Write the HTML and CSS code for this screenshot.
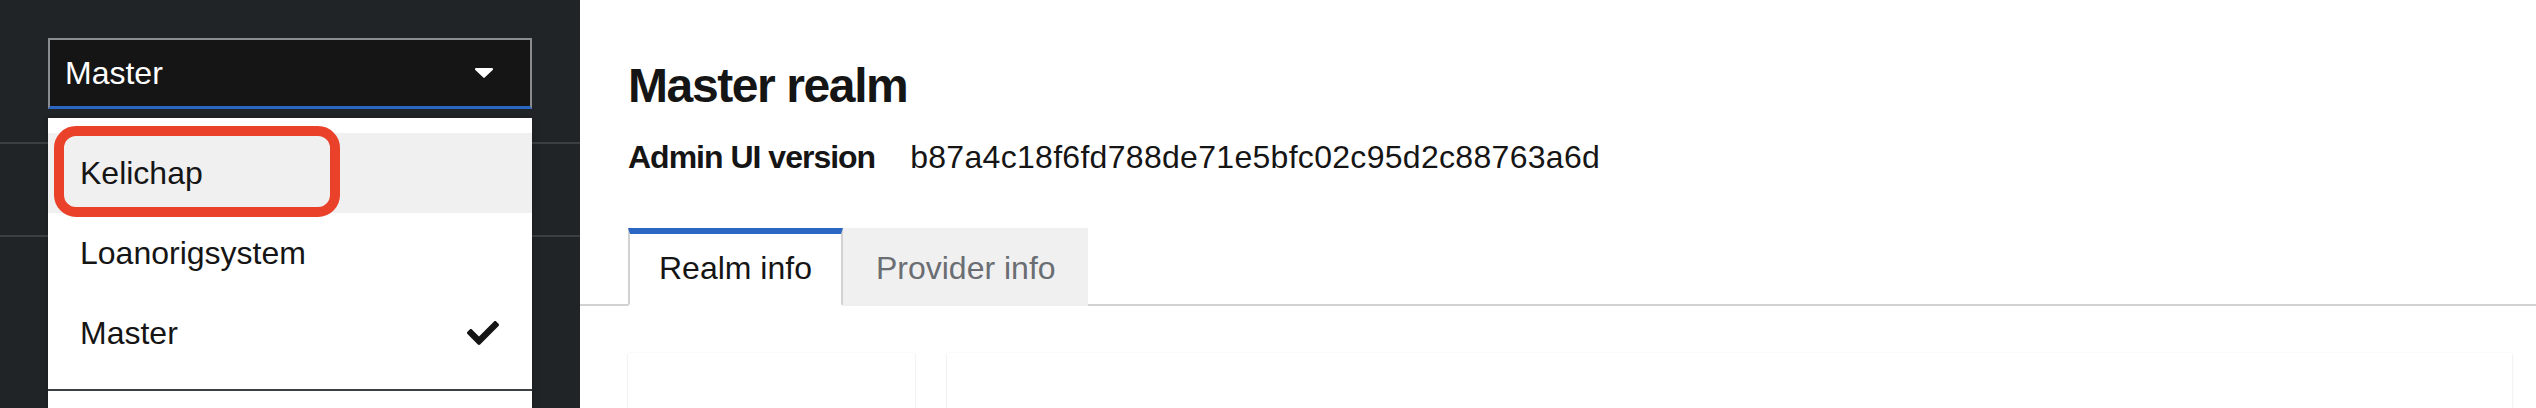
FILE: index.html
```html
<!DOCTYPE html>
<html lang="en">
<head>
<meta charset="utf-8">
<title>Master realm</title>
<link rel="stylesheet" href="styles.css">
</head>
<body>
<div class="page">
  <aside class="sidebar">
    <div class="realm-select">
      <button class="toggle" type="button">
        <span class="toggle-text">Master</span>
        <svg class="caret" viewBox="0 0 18 10" width="18" height="10" aria-hidden="true"><path d="M1.2 0h15.6c1 0 1.6 1.2.9 1.9L9.7 9.6c-.4.4-1 .4-1.4 0L.3 1.9C-.4 1.2.2 0 1.2 0z"/></svg>
      </button>
      <div class="menu">
        <ul class="menu-list">
          <li class="menu-item hovered"><span class="item-text">Kelichap</span><span class="annotation"></span></li>
          <li class="menu-item"><span class="item-text">Loanorigsystem</span></li>
          <li class="menu-item"><span class="item-text">Master</span>
            <svg class="check" viewBox="0 0 512 512" width="32" height="32" aria-hidden="true"><path d="M173.898 439.404l-166.4-166.4c-9.997-9.997-9.997-26.206 0-36.204l36.203-36.204c9.997-9.998 26.207-9.998 36.204 0L192 312.69 432.095 72.596c9.997-9.997 26.207-9.997 36.204 0l36.203 36.204c9.997 9.997 9.997 26.206 0 36.204l-294.4 294.401c-9.998 9.997-26.207 9.997-36.204-.001z"/></svg>
          </li>
        </ul>
        <div class="menu-footer"></div>
      </div>
    </div>
    <nav class="nav">
      <div class="nav-group"></div>
      <div class="nav-group"></div>
    </nav>
  </aside>
  <main class="main">
    <header class="header">
      <h1 class="title">Master realm</h1>
      <div class="version-row">
        <span class="version-label">Admin UI version</span>
        <span class="version-value">b87a4c18f6fd788de71e5bfc02c95d2c88763a6d</span>
      </div>
    </header>
    <div class="tabs">
      <button class="tab active" type="button">Realm info</button>
      <button class="tab" type="button">Provider info</button>
    </div>
    <section class="content">
      <div class="card card-small"></div>
      <div class="card card-large"></div>
    </section>
  </main>
</div>
</body>
</html>
```
FILE: styles.css
```css
* { box-sizing: border-box; }
html, body { margin: 0; padding: 0; }
body {
  font-family: "Liberation Sans", Arial, sans-serif;
  color: #151515;
  background: #fff;
  overflow: hidden;
}
.page {
  display: flex;
  width: 2536px;
  height: 408px;
  overflow: hidden;
}

/* Sidebar */
.sidebar {
  width: 580px;
  flex: none;
  background: #212427;
  padding: 38px 48px 0 48px;
}
.realm-select {
  position: relative;
  z-index: 2;
}
.toggle {
  display: flex;
  align-items: center;
  justify-content: space-between;
  width: 484px;
  height: 71px;
  margin: 0;
  padding: 0 37px 0 15px;
  background: #151515;
  border: 2px solid #8a8d90;
  border-bottom: 3px solid #2b66c3;
  color: #fff;
  font-family: inherit;
  font-size: 32px;
  line-height: 48px;
  cursor: pointer;
}
.toggle-text { display: block; }
.caret { display: block; fill: #fff; }

.menu {
  position: absolute;
  top: 80px;
  left: 0;
  width: 484px;
  background: #fff;
  box-shadow: 0 4px 8px rgba(3, 3, 3, 0.12), 0 0 4px rgba(3, 3, 3, 0.06);
}
.menu-list {
  list-style: none;
  margin: 0;
  padding: 15px 0 16px 0;
}
.menu-item {
  position: relative;
  display: flex;
  align-items: center;
  justify-content: space-between;
  height: 80px;
  padding: 0 33px 0 32px;
  font-size: 32px;
  line-height: 48px;
  color: #151515;
}
.menu-item.hovered { background: #f0f0f0; }
.item-text { display: block; }
.check { display: block; fill: #151515; }
.annotation {
  position: absolute;
  left: 6px;
  top: -7px;
  width: 286px;
  height: 91px;
  border: 10px solid #e9412a;
  border-radius: 22px;
}
.menu-footer {
  height: 60px;
  border-top: 2px solid #3c3f44;
}

.nav {
  margin: 33px -48px 0 -48px;
}
.nav-group {
  height: 93px;
  border-top: 2px solid #3c3f42;
}

/* Main */
.main {
  flex: 1;
  background: #fff;
  display: flex;
  flex-direction: column;
}
.header {
  padding: 56px 48px 0 48px;
}
.title {
  margin: 0;
  font-size: 48px;
  line-height: 60px;
  font-weight: 700;
  letter-spacing: -1.4px;
  color: #151515;
}
.version-row {
  display: flex;
  align-items: baseline;
  gap: 35px;
  margin-top: 17px;
  font-size: 32px;
  line-height: 48px;
}
.version-label {
  font-weight: 700;
  letter-spacing: -1px;
}
.version-value {
  letter-spacing: 0.3px;
}

.tabs {
  display: flex;
  margin-top: 47px;
  padding-left: 48px;
  border-bottom: 2px solid #d2d2d2;
}
.tab {
  flex: none;
  white-space: nowrap;
  margin: 0 0 -2px 0;
  padding: 10px 32px 14px 33px;
  border: none;
  border-top: 6px solid transparent;
  background: #f0f0f0;
  font-family: inherit;
  font-size: 32px;
  line-height: 48px;
  color: #6a6e73;
  cursor: pointer;
}
.tab.active {
  background: #fff;
  color: #151515;
  border-top-color: #2b66c3;
  border-left: 2px solid #d2d2d2;
  border-right: 2px solid #d2d2d2;
  border-bottom: 2px solid #fff;
  padding: 10px 29px 12px 29px;
}

.content {
  display: flex;
  gap: 32px;
  padding: 47px 24px 0 48px;
}
.card {
  height: 120px;
  background: #fff;
  box-shadow: 0 1px 2px rgba(3, 3, 3, 0.10), 0 0 2px rgba(3, 3, 3, 0.06);
}
.card-small { width: 287px; flex: none; }
.card-large { flex: 1; }
```
